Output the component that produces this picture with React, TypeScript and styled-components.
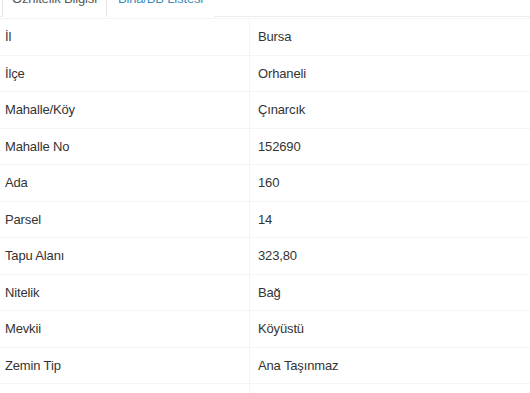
import React from "react";
import styled, { createGlobalStyle } from "styled-components";

const GlobalStyle = createGlobalStyle`
  html, body {
    margin: 0;
    padding: 0;
    background: #fff;
    overflow: hidden;
  }
  body {
    font-family: "Liberation Sans", Arial, Helvetica, sans-serif;
    font-size: 13px;
    color: #333;
  }
  * { box-sizing: border-box; }
`;

const Panel = styled.div`
  width: 100%;
  background: #fff;
`;

const TabBar = styled.ul`
  list-style: none;
  margin: -25px 0 0 0;
  padding: 0 0 0 2px;
  display: flex;
  border-bottom: 1px solid #ececec;
`;

const Tab = styled.li<{ $active?: boolean }>`
  margin-bottom: -1px;
  padding: 13px ${(p) => (p.$active ? "9px" : "10px")} 7px;
  line-height: 20px;
  font-size: 13px;
  letter-spacing: -0.15px;
  border: 1px solid ${(p) => (p.$active ? "#e6e6e6" : "transparent")};
  border-bottom-color: ${(p) => (p.$active ? "#fff" : "transparent")};
  background: #fff;
  color: ${(p) => (p.$active ? "#555" : "#3c8dbc")};
  white-space: nowrap;
  cursor: pointer;
`;

const Content = styled.div`
  padding-top: 1px;
`;

const Row = styled.div`
  display: grid;
  grid-template-columns: 249px 1fr;
  border-top: 1px solid #f4f4f4;
`;

const Cell = styled.div<{ $value?: boolean }>`
  padding: 8px 8px 8px ${(p) => (p.$value ? "8px" : "5px")};
  line-height: 19.5px;
  min-height: 35.5px;
  font-size: 13px;
  letter-spacing: -0.15px;
  color: #333;
  border-left: ${(p) => (p.$value ? "1px solid #f4f4f4" : "none")};
  white-space: nowrap;
`;

const rows: [string, string][] = [
  ["İl", "Bursa"],
  ["İlçe", "Orhaneli"],
  ["Mahalle/Köy", "Çınarcık"],
  ["Mahalle No", "152690"],
  ["Ada", "160"],
  ["Parsel", "14"],
  ["Tapu Alanı", "323,80"],
  ["Nitelik", "Bağ"],
  ["Mevkii", "Köyüstü"],
  ["Zemin Tip", "Ana Taşınmaz"],
  ["", ""],
];

export default function App() {
  return (
    <>
      <GlobalStyle />
      <Panel>
        <TabBar>
          <Tab $active>Öznitelik Bilgisi</Tab>
          <Tab>Bina/BB Listesi</Tab>
        </TabBar>
        <Content>
          {rows.map(([k, v], i) => (
            <Row key={i}>
              <Cell>{k}</Cell>
              <Cell $value>{v}</Cell>
            </Row>
          ))}
        </Content>
      </Panel>
    </>
  );
}
